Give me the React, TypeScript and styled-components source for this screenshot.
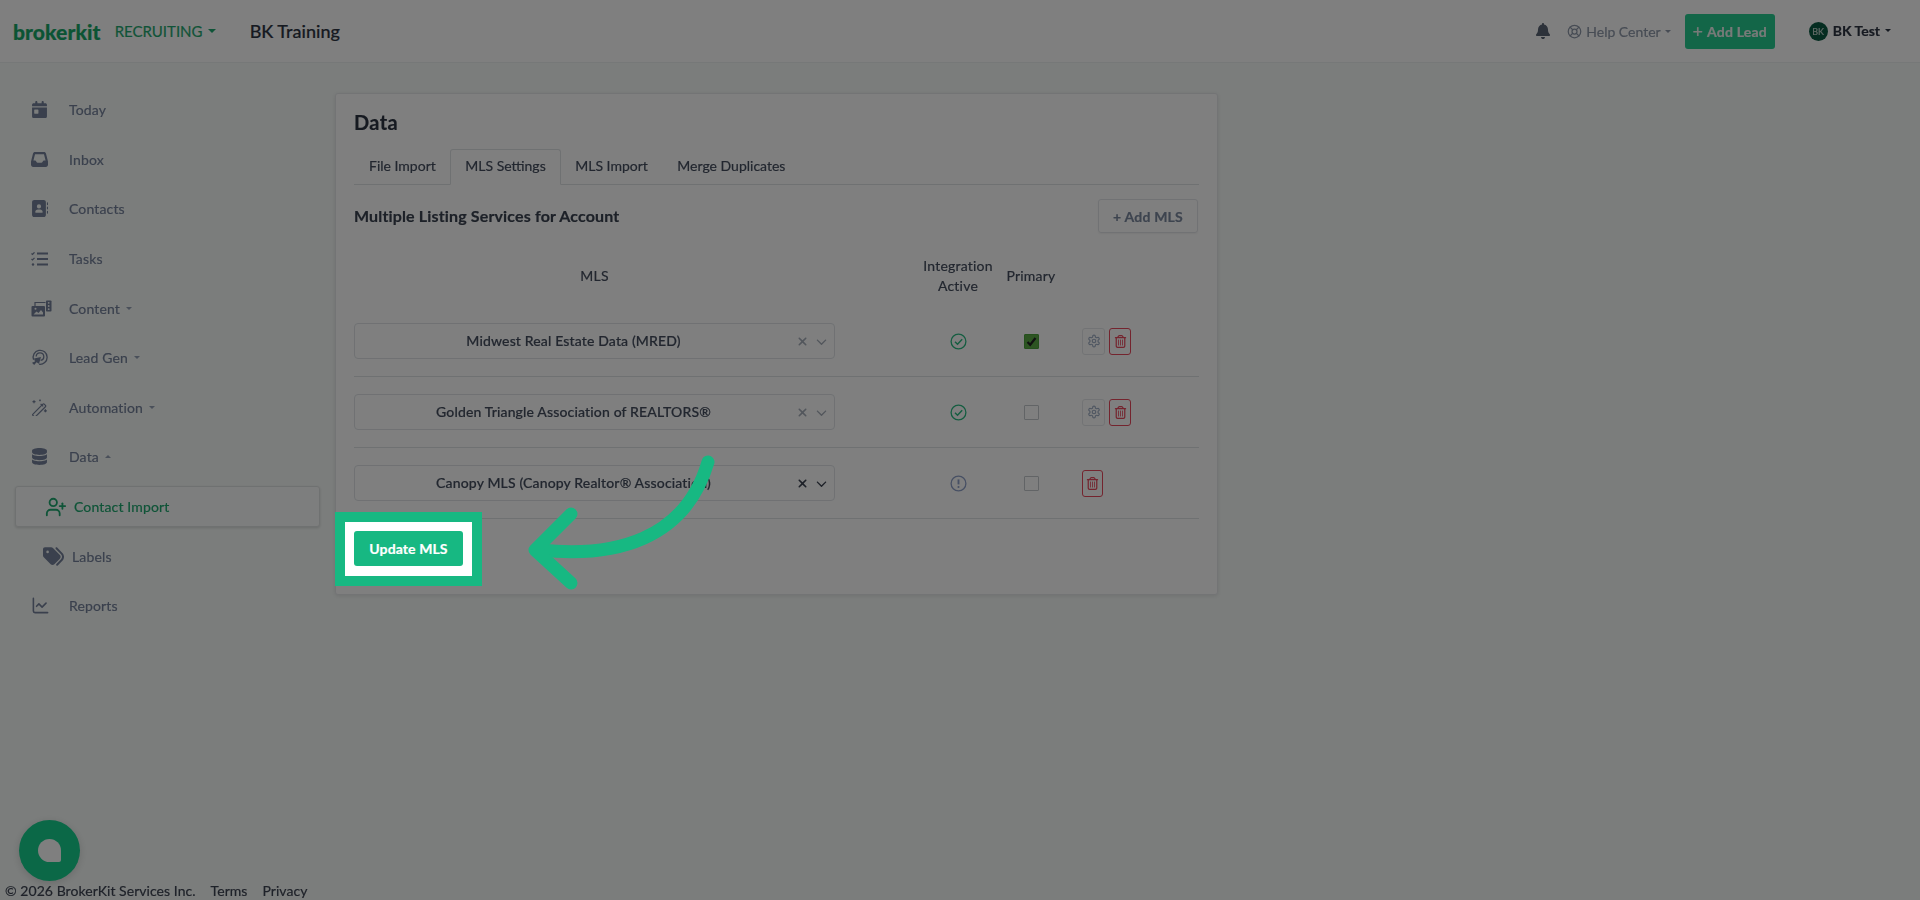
import React from 'react';
import styled, { createGlobalStyle } from 'styled-components';
import {
  FaCalendarDay, FaInbox, FaAddressBook, FaDatabase, FaTags, FaBell, FaXmark, FaChevronDown, FaRegTrashCan,
} from 'react-icons/fa6';
import { LuUserPlus, LuChartLine, LuLifeBuoy, LuSettings } from 'react-icons/lu';

const Global = createGlobalStyle`
  html, body { margin: 0; padding: 0; height: 100%; overflow: hidden; background: #f7faf9; }
  * { box-sizing: border-box; }
  body { font-family: "Lato", "Noto Sans", sans-serif; color: #2d3442; -webkit-text-stroke: 0.2px; }
`;

const Page = styled.div`
  position: relative;
  width: 1920px;
  height: 900px;
  display: flex;
  flex-direction: column;
  overflow: hidden;
  filter: blur(0.45px);
`;
const Dim = styled.div`
  position: absolute;
  inset: 0;
  background: rgba(0, 0, 0, 0.5);
  z-index: 10;
`;
const Header = styled.header`
  height: 63px;
  flex: none;
  display: flex;
  align-items: center;
  background: #fff;
  border-bottom: 1px solid #edf0f0;
  padding: 0 29px 0 13px;
`;
const Logo = styled.div`
  font-size: 21px;
  font-weight: 900;
  color: #17a868;
  letter-spacing: 0.1px;
  margin-right: 14px;
`;
const Product = styled.div`
  display: flex;
  align-items: center;
  gap: 5px;
  font-size: 15px;
  color: #1fa870;
  width: 135px;
`;
const Caret = styled.span<{ $up?: boolean; $size?: number }>`
  display: inline-block;
  width: 0;
  height: 0;
  border-left: ${(p) => p.$size ?? 4}px solid transparent;
  border-right: ${(p) => p.$size ?? 4}px solid transparent;
  ${(p) => (p.$up ? 'border-bottom' : 'border-top')}: ${(p) => p.$size ?? 4}px solid currentColor;
`;
const Account = styled.div`
  font-size: 18px;
  font-weight: 500;
  color: #2d3442;
`;
const HeaderRight = styled.div`
  margin-left: auto;
  display: flex;
  align-items: center;
`;
const Bell = styled(FaBell)`
  font-size: 16px;
  color: #5a6474;
  margin-right: 16px;
`;
const Help = styled.div`
  display: flex;
  align-items: center;
  gap: 4px;
  font-size: 14px;
  color: #8e98a9;
  margin-right: 14px;
`;
const AddLead = styled.div`
  width: 90px;
  height: 35px;
  border-radius: 3px;
  background: #26cc90;
  color: #f0f4f2;
  font-size: 14px;
  font-weight: 700;
  letter-spacing: 0.2px;
  display: flex;
  align-items: center;
  justify-content: center;
  gap: 4px;
  margin-right: 34px;
`;
const AddPlus = styled.span`
  font-size: 18px;
  font-weight: 400;
  line-height: 1;
`;
const User = styled.div`
  display: flex;
  align-items: center;
  gap: 5px;
  font-size: 14px;
  font-weight: 700;
  color: #2d3442;
  margin-top: -2px;
`;
const Avatar = styled.div`
  width: 19px;
  height: 19px;
  border-radius: 50%;
  background: #0a5a42;
  color: #c6d6d0;
  font-size: 9px;
  font-weight: 400;
  display: flex;
  align-items: center;
  justify-content: center;
  margin-top: 2px;
`;
const Body = styled.div`
  flex: 1;
  display: flex;
  min-height: 0;
`;
const Sidebar = styled.nav`
  width: 335px;
  flex: none;
  padding-top: 22px;
  display: flex;
  flex-direction: column;
`;
const NavItem = styled.div<{ $sub?: boolean; $active?: boolean }>`
  height: ${(p) => (p.$active ? '41px' : '49.6px')};
  margin: ${(p) => (p.$active ? '4.5px 15px 4.1px' : '0')};
  padding-left: ${(p) => (p.$active ? '29px' : p.$sub ? '43px' : '31px')};
  display: flex;
  align-items: center;
  font-size: 14px;
  letter-spacing: 0.15px;
  color: ${(p) => (p.$active ? '#1fa870' : '#74819a')};
  ${(p) => p.$active && `
    background: #fbfdfc;
    border: 1px solid #dfe3e3;
    border-radius: 3px;
    box-shadow: 0 1px 3px rgba(0,0,0,.14);
  `}
`;
const NavIcon = styled.span<{ $w: number; $size: number }>`
  width: ${(p) => p.$w}px;
  flex: none;
  display: flex;
  align-items: center;
  font-size: ${(p) => p.$size}px;
`;
const NavCaret = styled.span`
  margin-left: 6px;
  display: flex;
  color: #95a1b4;
`;
const Content = styled.main`
  flex: 1;
  padding-top: 30px;
`;
const Card = styled.section`
  width: 883px;
  height: 502px;
  background: #fff;
  border: 1px solid #e6e8eb;
  border-radius: 3px;
  box-shadow: 0 1px 4px rgba(0, 0, 0, 0.1);
  padding: 16px 18px 0 18px;
`;
const Title = styled.h1`
  margin: 0;
  font-size: 20px;
  line-height: 24px;
  font-weight: 700;
  color: #2d3442;
  letter-spacing: 0.4px;
`;
const Tabs = styled.div`
  display: flex;
  height: 36px;
  margin-top: 15px;
  border-bottom: 1px solid #dfe2e5;
`;
const Tab = styled.div<{ $active?: boolean }>`
  height: 36px;
  padding: 0 14px 3px;
  margin-right: -0.5px;
  display: flex;
  align-items: center;
  font-size: 14px;
  color: #444d5e;
  border: 1px solid transparent;
  ${(p) => p.$active && `
    border-color: #dfe2e5;
    border-bottom-color: #fff;
    border-radius: 3px 3px 0 0;
    background: #fff;
  `}
`;
const SectionHead = styled.div`
  display: flex;
  align-items: center;
  justify-content: space-between;
  padding-top: 14px;
  padding-right: 1px;
`;
const Subtitle = styled.h2`
  margin: -2px 0 0;
  font-size: 16px;
  font-weight: 700;
  letter-spacing: 0.15px;
  color: #3a4250;
`;
const AddMls = styled.div`
  width: 100px;
  height: 34px;
  border: 1px solid #e2e5e9;
  border-radius: 3px;
  box-shadow: 0 1px 2px rgba(0, 0, 0, 0.06);
  display: flex;
  align-items: center;
  justify-content: center;
  font-size: 14px;
  font-weight: 700;
  letter-spacing: 0.2px;
  color: #7b889e;
`;
const Grid = styled.div`
  display: grid;
  grid-template-columns: 481px 163px 66px 1fr;
  justify-items: center;
  align-items: center;
`;
const HeadGrid = styled(Grid)`
  height: 73px;
  padding-top: 12px;
  font-size: 14px;
  letter-spacing: 0.2px;
  line-height: 20px;
  color: #444d5e;
  text-align: center;
`;
const IntegrationCell = styled.div`
  justify-self: end;
  width: 80px;
  display: flex;
  justify-content: center;
`;
const Row = styled(Grid)`
  height: 71px;
  border-bottom: 1px solid #dfe2e5;
`;
const Select = styled.div`
  justify-self: stretch;
  height: 36px;
  border: 1px solid #e0e3e6;
  border-radius: 4px;
  background: #fff;
  display: flex;
  align-items: center;
  font-size: 14px;
  font-weight: 500;
  letter-spacing: 0.15px;
  color: #444d5e;
  padding-right: 7px;
`;
const SelectText = styled.div`
  flex: 1;
  text-align: center;
  padding: 0 4px 2px 0;
  white-space: nowrap;
  overflow: hidden;
`;
const SelectIcons = styled.div<{ $strong?: boolean }>`
  display: flex;
  align-items: center;
  gap: 7px;
  color: ${(p) => (p.$strong ? '#3b4250' : '#a5adb8')};
`;
const Status = styled.div<{ $ok?: boolean }>`
  display: flex;
  color: ${(p) => (p.$ok ? '#2bbb82' : '#8fa0c8')};
`;
const Box = styled.div<{ $on?: boolean }>`
  width: 15px;
  height: 15px;
  border-radius: 1px;
  border: 1px solid ${(p) => (p.$on ? '#4aa03a' : '#c4c8cc')};
  background: ${(p) => (p.$on ? '#5aa845' : '#fff')};
  display: flex;
  align-items: center;
  justify-content: center;
`;
const Actions = styled.div`
  justify-self: start;
  display: flex;
  gap: 4px;
  margin-left: 18px;
`;
const SquareBtn = styled.div<{ $danger?: boolean; $w?: number }>`
  width: ${(p) => p.$w ?? 23}px;
  height: 27px;
  border: 1px solid ${(p) => (p.$danger ? '#e8485c' : '#e4e7ea')};
  border-radius: 3px;
  color: ${(p) => (p.$danger ? '#e8485c' : '#a0aec4')};
  display: flex;
  align-items: center;
  justify-content: center;
  font-size: 13px;
`;
const Spotlight = styled.div`
  position: relative;
  z-index: 11;
  display: inline-flex;
  background: #fff;
  padding: 9px 9px 10px;
  margin: 3px 0 0 -9px;
  outline: 10px solid #17b882;
`;
const UpdateBtn = styled.div`
  width: 109px;
  height: 35px;
  border-radius: 3px;
  background: #17b882;
  color: #fff;
  font-size: 14px;
  font-weight: 700;
  letter-spacing: 0.1px;
  display: flex;
  align-items: center;
  justify-content: center;
`;
const Arrow = styled.svg`
  position: absolute;
  left: 520px;
  top: 450px;
  z-index: 12;
  overflow: visible;
`;
const Footer = styled.footer`
  height: 20px;
  flex: none;
  padding-left: 5px;
  display: flex;
  align-items: center;
  gap: 15px;
  font-size: 14px;
  letter-spacing: 0.05px;
  color: #3d4452;
`;
const Chat = styled.div`
  position: absolute;
  left: 19px;
  top: 820px;
  width: 61px;
  height: 61px;
  border-radius: 50%;
  background: #16d08e;
  box-shadow: 0 2px 8px rgba(0, 0, 0, 0.15);
  display: flex;
  align-items: center;
  justify-content: center;
`;
const ChatDot = styled.div`
  width: 23px;
  height: 23px;
  background: #fff;
  border-radius: 50% 50% 2px 50%;
`;

const TasksIcon = () => (
  <svg width="17" height="14" viewBox="0 0 17 14" fill="none" stroke="currentColor" strokeWidth="2" strokeLinecap="butt">
    <path d="M6 1.5h11M6 7h11M6 12.5h11" />
    <path d="M.5 1.5l1 1 2-2.2M.5 7l1 1 2-2.2" strokeWidth="1.2" />
    <circle cx="2" cy="12.5" r="1.2" fill="currentColor" stroke="none" />
  </svg>
);
const ContentIcon = () => (
  <svg width="21" height="17" viewBox="0 0 21 17">
    <path d="M4 6V2.5h10.5" fill="none" stroke="currentColor" strokeWidth="1.2" />
    <rect x="15" y="0.5" width="5.5" height="11" rx="0.8" fill="currentColor" />
    <g fill="#f7faf9"><circle cx="17.7" cy="2.8" r="0.9" /><circle cx="17.7" cy="6" r="0.9" /><circle cx="17.7" cy="9.2" r="0.9" /></g>
    <rect x="0.5" y="6" width="13.5" height="10.5" rx="1" fill="currentColor" />
    <path d="M2.5 14.5l3-3 2 1.5 2.5-3 2 2.5v2z" fill="#f7faf9" />
    <circle cx="4.5" cy="8.7" r="1" fill="#f7faf9" />
  </svg>
);
const LeadIcon = () => (
  <svg width="17" height="17" viewBox="0 0 17 17" fill="none" stroke="currentColor" strokeWidth="1.3">
    <path d="M2.6 10.8A7 7 0 1 1 8 15.2" />
    <path d="M5.2 7.6A3.8 3.8 0 1 1 9.6 11.4" />
    <path d="M1 13.8l3-1.2-1-3 7-1.5-2 6.7-2.5-1.6-2.3 2.8z" fill="currentColor" stroke="none" />
  </svg>
);
const WandIcon = () => (
  <svg width="17" height="17" viewBox="0 0 17 17" fill="none" stroke="currentColor" strokeWidth="1.2">
    <rect x="0.2" y="9.6" width="16" height="3.6" rx="1" transform="rotate(-45 8.2 11.4)" />
    <path d="M9.6 4.8l2.6 2.6" />
    <path d="M3 1.2v3M1.5 2.7h3M14.4 10.3v3M12.9 11.8h3M9 .6v1.6M8.2 1.4h1.6" />
  </svg>
);
const CheckIcon = () => (
  <svg width="17" height="17" viewBox="0 0 17 17" fill="none" stroke="currentColor" strokeWidth="1.3">
    <circle cx="8.5" cy="8.5" r="7.4" />
    <path d="M5 8.8l2.5 2.4 4.7-5" strokeWidth="1.5" />
  </svg>
);
const AlertIcon = () => (
  <svg width="17" height="17" viewBox="0 0 17 17" fill="none" stroke="currentColor" strokeWidth="1.3">
    <circle cx="8.5" cy="8.5" r="7.4" />
    <path d="M8.5 4.4v5" strokeWidth="1.9" />
    <circle cx="8.5" cy="12" r="1.05" fill="currentColor" stroke="none" />
  </svg>
);

const nav = [
  { label: 'Today', icon: <FaCalendarDay />, w: 38, size: 17 },
  { label: 'Inbox', icon: <FaInbox />, w: 38, size: 17 },
  { label: 'Contacts', icon: <FaAddressBook />, w: 38, size: 17 },
  { label: 'Tasks', icon: <TasksIcon />, w: 38, size: 17 },
  { label: 'Content', icon: <ContentIcon />, w: 38, size: 18, caret: 'down' },
  { label: 'Lead Gen', icon: <LeadIcon />, w: 38, size: 19, caret: 'down' },
  { label: 'Automation', icon: <WandIcon />, w: 38, size: 18, caret: 'down' },
  { label: 'Data', icon: <FaDatabase />, w: 38, size: 17, caret: 'up' },
  { label: 'Contact Import', icon: <LuUserPlus />, w: 29, size: 22, active: true, sub: true },
  { label: 'Labels', icon: <FaTags />, w: 29, size: 21, sub: true },
  { label: 'Reports', icon: <LuChartLine />, w: 38, size: 19 },
];

const rows = [
  { name: 'Midwest Real Estate Data (MRED)', ok: true, primary: true, gear: true },
  { name: 'Golden Triangle Association of REALTORS®', ok: true, gear: true },
  { name: 'Canopy MLS (Canopy Realtor® Association)', strong: true },
];

export default function App() {
  return (
    <Page>
      <Global />
      <Header>
        <Logo>brokerkit</Logo>
        <Product>RECRUITING <Caret /></Product>
        <Account>BK Training</Account>
        <HeaderRight>
          <Bell />
          <Help><LuLifeBuoy size={15} /> Help Center <Caret $size={3} /></Help>
          <AddLead><AddPlus>+</AddPlus> Add Lead</AddLead>
          <User><Avatar>BK</Avatar> BK Test <Caret $size={3} /></User>
        </HeaderRight>
      </Header>
      <Body>
        <Sidebar>
          {nav.map((n) => (
            <NavItem key={n.label} $sub={n.sub} $active={n.active}>
              <NavIcon $w={n.w} $size={n.size}>{n.icon}</NavIcon>
              {n.label}
              {n.caret && <NavCaret><Caret $size={3} $up={n.caret === 'up'} /></NavCaret>}
            </NavItem>
          ))}
        </Sidebar>
        <Content>
          <Card>
            <Title>Data</Title>
            <Tabs>
              <Tab>File Import</Tab>
              <Tab $active>MLS Settings</Tab>
              <Tab>MLS Import</Tab>
              <Tab>Merge Duplicates</Tab>
            </Tabs>
            <SectionHead>
              <Subtitle>Multiple Listing Services for Account</Subtitle>
              <AddMls>+ Add MLS</AddMls>
            </SectionHead>
            <HeadGrid>
              <div>MLS</div>
              <IntegrationCell>Integration<br />Active</IntegrationCell>
              <div>Primary</div>
            </HeadGrid>
            {rows.map((r) => (
              <Row key={r.name}>
                <Select>
                  <SelectText>{r.name}</SelectText>
                  <SelectIcons $strong={r.strong}><FaXmark size={13} /><FaChevronDown size={11} /></SelectIcons>
                </Select>
                <IntegrationCell>
                  <Status $ok={r.ok}>{r.ok ? <CheckIcon /> : <AlertIcon />}</Status>
                </IntegrationCell>
                <Box $on={r.primary}>
                  {r.primary && (
                    <svg width="11" height="11" viewBox="0 0 11 11"><path d="M1.5 6 L4.2 8.8 L9.5 2" fill="none" stroke="#222" strokeWidth="2.2" /></svg>
                  )}
                </Box>
                <Actions>
                  {r.gear && <SquareBtn><LuSettings size={14} /></SquareBtn>}
                  <SquareBtn $danger $w={r.gear ? 22 : 21}><FaRegTrashCan size={13} /></SquareBtn>
                </Actions>
              </Row>
            ))}
            <Spotlight><UpdateBtn>Update MLS</UpdateBtn></Spotlight>
          </Card>
        </Content>
      </Body>
      <Footer>
        <span>© 2026 BrokerKit Services Inc.</span>
        <span>Terms</span>
        <span>Privacy</span>
      </Footer>
      <Dim />
      <Arrow width="200" height="145" viewBox="0 0 200 145" fill="none" stroke="#17b882" strokeWidth="13" strokeLinecap="round" strokeLinejoin="round">
        <path d="M188 12 C165 90 95 108 20 100" />
        <path d="M51 64 L15 100 L51 133" />
      </Arrow>
      <Chat><ChatDot /></Chat>
    </Page>
  );
}
